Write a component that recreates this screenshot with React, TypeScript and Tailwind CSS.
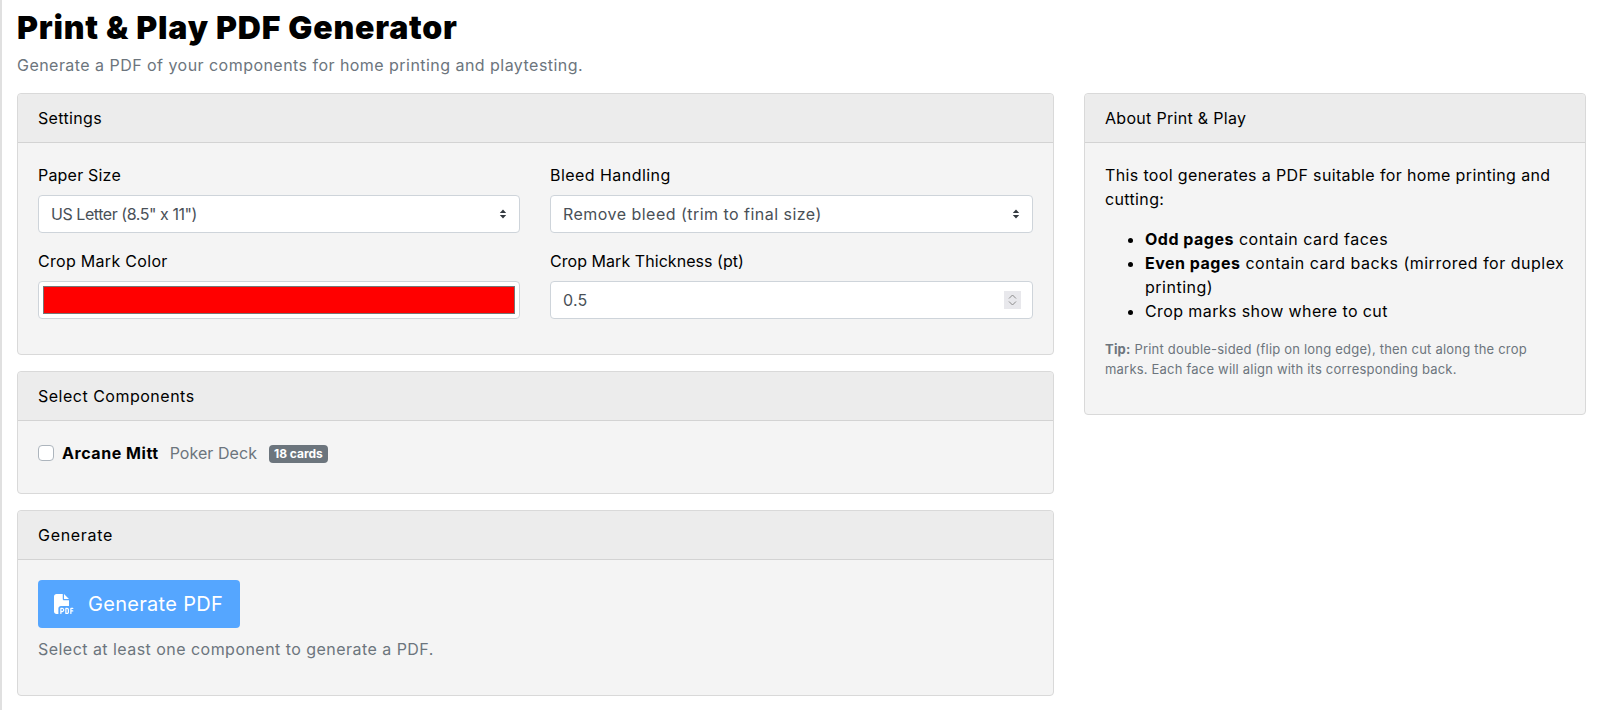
import type { ReactNode } from "react";
import { FaFilePdf } from "react-icons/fa6";

const labelClass = "mb-2 block text-base leading-6 text-[#000]";
const controlClass =
  "block h-[38px] w-full appearance-none rounded-[4px] border border-[#ced4da] bg-white py-1.5 pl-3 pr-9 text-base leading-6 text-[#495057] outline-none font-[inherit]";

function Card({
  title,
  titleClass,
  className,
  children,
}: {
  title: string;
  titleClass: string;
  className?: string;
  children: ReactNode;
}) {
  return (
    <section className={`rounded-[4px] border border-[#d9d9d9] bg-[#f4f4f4] ${className ?? ""}`}>
      <h2
        className={`rounded-t-[4px] border-b border-[#d3d3d3] bg-[#ececec] px-5 py-3 text-base font-normal leading-6 text-black ${titleClass}`}
      >
        {title}
      </h2>
      <div className="p-5">{children}</div>
    </section>
  );
}

function SelectField({
  label,
  value,
  labelTracking,
  valueTracking,
}: {
  label: string;
  value: string;
  labelTracking: string;
  valueTracking: string;
}) {
  return (
    <div>
      <label className={`${labelClass} ${labelTracking}`}>{label}</label>
      <div className="relative">
        <select className={`${controlClass} ${valueTracking}`} defaultValue={value}>
          <option>{value}</option>
        </select>
        <svg
          className="pointer-events-none absolute right-[13px] top-[13px] h-3 w-2 text-[#343a40]"
          viewBox="0 0 8 12"
          fill="currentColor"
          aria-hidden
        >
          <path d="M4 1.5 7.2 5H.8zM4 10.5.8 7h6.4z" />
        </svg>
      </div>
    </div>
  );
}

export default function App() {
  return (
    <div className="min-h-[710px] border-l-2 border-[#e0e0e0] bg-white pl-[15px] pr-[15px] font-['Inter',sans-serif] text-black">
      <h1 className="pt-2 text-[32px] font-black leading-[40px] tracking-[0.8px]">Print &amp; Play PDF Generator</h1>
      <p className="mt-[5px] text-base leading-6 tracking-[0.46px] text-[#6c757d]">
        Generate a PDF of your components for home printing and playtesting.
      </p>

      <div className="mt-4 flex items-start gap-[30px]">
        <div className="flex w-[1037px] shrink-0 flex-col gap-4">
          <Card title="Settings" titleClass="tracking-[0.35px]" className="h-[262px]">
            <div className="grid grid-cols-[482px_483px] gap-x-[30px] gap-y-4">
              <SelectField
                label="Paper Size"
                value={'US Letter (8.5" x 11")'}
                labelTracking="tracking-[0.2px]"
                valueTracking="tracking-[-0.45px]"
              />
              <SelectField
                label="Bleed Handling"
                value="Remove bleed (trim to final size)"
                labelTracking="tracking-[0.45px]"
                valueTracking="tracking-[0.47px]"
              />
              <div>
                <label className={`${labelClass} tracking-[0.3px]`}>Crop Mark Color</label>
                <div className="h-[38px] rounded-[4px] border border-[#ced4da] bg-white p-1">
                  <div className="h-full border border-[#767676] bg-[#ff0000]" />
                </div>
              </div>
              <div>
                <label className={`${labelClass} tracking-[0.05px]`}>Crop Mark Thickness (pt)</label>
                <div className="relative">
                  <input className={`${controlClass} font-['Roboto',sans-serif] tracking-[0.25px]`} defaultValue="0.5" />
                  <div className="pointer-events-none absolute right-3 top-[10px] flex h-[18px] w-[17px] flex-col items-center justify-center gap-[2px] bg-[#e8e8ec] text-[#8a8a8a]">
                    <svg className="h-[5px] w-[9px]" viewBox="0 0 9 5" fill="none" stroke="currentColor" aria-hidden>
                      <path d="M1 4.5 4.5 1 8 4.5" />
                    </svg>
                    <svg className="h-[5px] w-[9px]" viewBox="0 0 9 5" fill="none" stroke="currentColor" aria-hidden>
                      <path d="M1 .5 4.5 4 8 .5" />
                    </svg>
                  </div>
                </div>
              </div>
            </div>
          </Card>

          <Card title="Select Components" titleClass="tracking-[0.5px]" className="h-[123px]">
            <label className="flex h-6 items-center">
              <span className="h-4 w-4 rounded-[4px] border border-[#adb5bd] bg-white" />
              <span className="ml-2 font-bold tracking-[0.55px]">Arcane Mitt</span>
              <span className="ml-[11px] tracking-[0.05px] text-[#6c757d]">Poker Deck</span>
              <span className="ml-3 mt-[2px] rounded-[4px] bg-[#6c757d] px-[5px] py-[3px] text-xs font-bold leading-3 text-white">
                18 cards
              </span>
            </label>
          </Card>

          <Card title="Generate" titleClass="tracking-[0.7px]" className="h-[186px]">
            <button className="flex h-12 w-[202px] items-center rounded-[4px] bg-[#55a6ff] pl-4 text-xl text-white">
              <FaFilePdf className="h-5 w-5" aria-hidden />
              <span className="ml-[14px] tracking-[0.3px]">Generate PDF</span>
            </button>
            <p className="mt-[9px] text-base leading-6 tracking-[0.46px] text-[#6c757d]">
              Select at least one component to generate a PDF.
            </p>
          </Card>
        </div>

        <Card title="About Print &amp; Play" titleClass="tracking-[0.3px]" className="w-[502px] shrink-0">
          <p className="text-base leading-6 tracking-[0.36px]">
            This tool generates a PDF suitable for home printing and cutting:
          </p>
          <ul className="mt-4 list-disc pl-10 text-base leading-6 tracking-[0.5px]">
            <li><strong className="font-bold">Odd pages</strong> contain card faces</li>
            <li><strong className="font-bold">Even pages</strong> contain card backs (mirrored for duplex printing)</li>
            <li className="tracking-[0.4px]">Crop marks show where to cut</li>
          </ul>
          <p className="mt-[17px] pb-[15px] text-[13px] leading-[19.5px] tracking-[0.2px] text-[#6c757d]">
            <strong className="font-bold">Tip:</strong> Print double-sided (flip on long edge), then cut along the crop
            marks. Each face will align with its corresponding back.
          </p>
        </Card>
      </div>
    </div>
  );
}
